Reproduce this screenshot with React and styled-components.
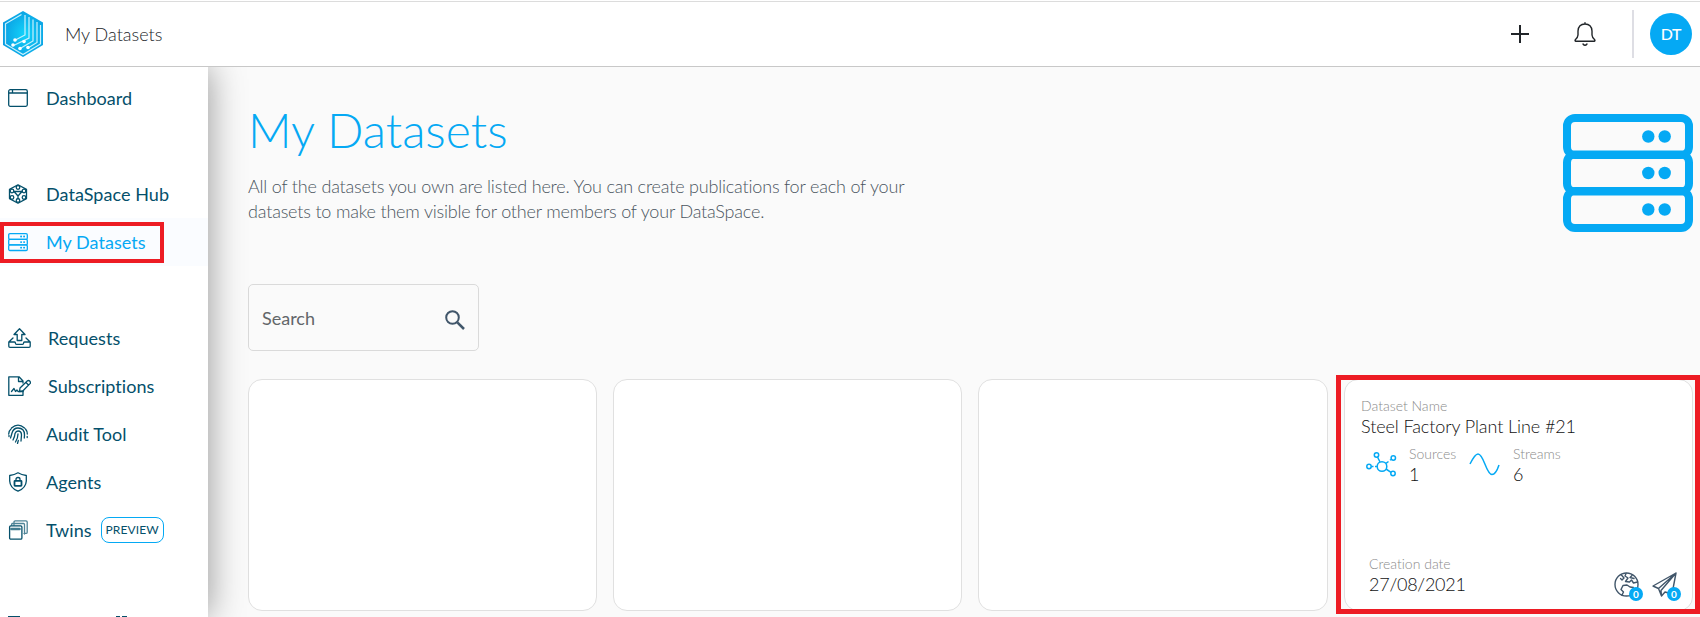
import React from 'react';
import styled, { createGlobalStyle } from 'styled-components';

const Global = createGlobalStyle`
  * { box-sizing: border-box; }
  html, body { margin: 0; height: 617px; overflow: hidden; }
  body { font-family: Lato, "Liberation Sans", sans-serif; font-variant-ligatures: none; background: #fafafa; }
`;
const blue = '#05a9f4';
const teal = '#04506b';

const Page = styled.div`
  height: 617px; display: flex; flex-direction: column; overflow: hidden; background: #fafafa;
`;
const Header = styled.header`
  position: relative; z-index: 2; flex: none; height: 67px; display: flex; align-items: center;
  background: #fff; border-bottom: 1px solid #c8c8c8; padding: 1px 8px 0 2px;
  box-shadow: inset 0 1px 0 #fff, inset 0 2px 0 #dcdcdc;
`;
const Crumb = styled.span`
  font-size: 18px; font-weight: 300; color: #212529; margin-left: 21px; flex: 1; line-height: 24px; padding-top: 1px;
`;
const Divider = styled.i`width: 2px; height: 48px; background: #dedee4;`;
const Avatar = styled.div`
  width: 42px; height: 42px; border-radius: 50%; background: ${blue}; color: #fff; margin-left: 16px;
  display: flex; align-items: center; justify-content: center; font-size: 16px; font-weight: 500; letter-spacing: -.3px;
`;
const HeaderIcon = styled.svg`display: block; flex: none; margin-right: ${p => p.$gap}px;`;
const Body = styled.div`flex: 1; min-height: 0; display: flex;`;
const Sidebar = styled.nav`
  position: relative; z-index: 1; width: 208px; flex: none; background: #fff; padding-top: 7px;
  box-shadow: 0 0 34px rgba(0,0,0,.42); overflow: visible;
`;
const NavItem = styled.div`
  height: 48px; display: flex; align-items: center; padding-left: 8px; margin-bottom: ${p => p.$gap || 0}px;
  color: ${p => (p.$active ? blue : teal)}; background: ${p => (p.$active ? '#fafcff' : 'transparent')};
`;
const NavIcon = styled.svg`
  width: ${p => (p.$wide ? 23 : 20)}px; height: 20px; flex: none; display: block; fill: none; stroke: currentColor; stroke-width: 1.3;
  stroke-linecap: round; stroke-linejoin: round; margin-right: ${p => (p.$wide ? 17 : 18)}px;
`;
const NavLabel = styled.span`font-size: 18px; line-height: 24px; padding-bottom: 1px; letter-spacing: .05px;`;
const Preview = styled.span`
  margin-left: 9px; height: 26px; width: 63px; border: 1px solid ${blue}; border-radius: 8px; font-size: 12px; letter-spacing: .1px;
  display: flex; align-items: center; justify-content: center; padding-bottom: 2px;
`;
const Cut = styled.svg`display: block; height: 1px; width: 140px;`;
const Main = styled.main`flex: 1; min-width: 0; padding: 34px 7px 0 40px;`;
const Intro = styled.section`display: flex; justify-content: space-between; height: 183px;`;
const Title = styled.h1`margin: -1px 0 0; font-size: 48px; line-height: 60px; font-weight: 300; color: ${blue};`;
const Text = styled.p`
  margin: 14px 0 0; width: 670px; font-size: 18px; line-height: 25px; font-weight: 300; color: #4a5560; letter-spacing: -.19px;
`;
const ServerArt = styled.svg`display: block; margin-top: 13px; flex: none;`;
const Search = styled.div`
  width: 231px; height: 67px; border: 1px solid #dadada; border-radius: 5px; display: flex; align-items: center;
  justify-content: space-between; padding: 0 13px; font-size: 18px; color: #626669; font-weight: 400;
`;
const SearchIcon = styled.svg`display: block; margin-top: 4px; fill: none; stroke: #41566a; stroke-width: 2;`;
const Grid = styled.div`display: grid; grid-template-columns: 349px 349px 350px 1fr; gap: 16px; margin-top: 28px;`;
const Card = styled.article`
  height: 232px; background: #fff; border: 1px solid #e0e0e0; border-radius: 14px; padding: 17px 11px 0 16px;
  display: flex; flex-direction: column;
`;
const Caption = styled.div`font-size: 14px; line-height: 17px; font-weight: 300; color: #8b8b8b;`;
const Value = styled.div`font-size: 18px; line-height: 24px; font-weight: 300; color: #111; letter-spacing: -.09px;`;
const Stats = styled.div`display: flex; margin-top: 7px;`;
const Stat = styled.div`display: flex; width: ${p => p.$w}px;`;
const StatIcon = styled.svg`display: block; width: 32px; height: 28px; margin: 6px 12px 0 4px; fill: none; stroke: ${blue}; stroke-width: 1.5;`;
const Foot = styled.div`margin-top: auto; padding: 0 0 11px 8px; display: flex; justify-content: space-between; align-items: flex-end;`;
const Created = styled.div`padding-bottom: 3px; ${Value} { letter-spacing: -.25px; }`;
const Actions = styled.div`display: flex; gap: 9px; margin-bottom: -2px;`;
const Action = styled.div`position: relative; width: 29px; height: 29px;`;
const ActionIcon = styled.svg`display: block; fill: none; stroke: #41566a; stroke-width: 1.4; stroke-linejoin: round; stroke-linecap: round;`;
const Count = styled.b`
  position: absolute; right: 0; bottom: 0; width: 14px; height: 14px; border-radius: 50%; background: ${blue};
  color: #fff; font-size: 10px; line-height: 14px; text-align: center;
`;
const Mark = styled.div`
  position: absolute; z-index: 5; left: ${p => p.$x}px; top: ${p => p.$y}px; width: ${p => p.$w}px; height: ${p => p.$h}px;
  border: ${p => p.$b}px solid #ed1c24; pointer-events: none;
`;

const Logo = () => (
  <svg width="42" height="48" viewBox="0 0 42 48" fill="none">
    <defs>
      <radialGradient id="lg" cx=".55" cy=".5" r=".6">
        <stop offset="0" stopColor="#12d4fb" /><stop offset="1" stopColor="#0a9be0" />
      </radialGradient>
    </defs>
    <path d="M21 1 41 12.500V35L21 47 1 35V12.500Z" fill="url(#lg)" />
    <g stroke="#c9f1fd" strokeWidth="1.200">
      <path d="M19.500 4.500 3.500 13.800V34L21 44.500 38.500 34V15" />
      <path d="M23 5V25L12.500 30.500M27 7V28L10.500 36M31 9.500V31L19 38M35 12V32.500L26 38" />
    </g>
    <g fill="#fff"><circle cx="13" cy="30" r="1.800" /><circle cx="22" cy="31.500" r="1.800" /><circle cx="11" cy="35" r="1.800" /><circle cx="18" cy="38.500" r="1.800" /><circle cx="26" cy="37.500" r="1.800" /></g>
  </svg>
);

const icons = {
  dashboard: <><rect x=".7" y="1.700" width="18.600" height="16.600" rx="1.500" /><path d="M1 5H19M4.500 2V5" /></>,
  hub: <><path d="M10 .8 18.500 5.400V14.600L10 19.200 1.500 14.600V5.400Z" /><g strokeWidth="1.300"><circle cx="10" cy="3.500" r="1.800" /><circle cx="4" cy="7" r="1.800" /><circle cx="16" cy="7" r="1.800" /><circle cx="4" cy="13.500" r="1.800" /><circle cx="16" cy="13.500" r="1.800" /><circle cx="10" cy="16.500" r="1.800" /><path d="M6 7.500 10 12 14 7.500ZM10 12V15" /></g></>,
  data: <><rect x=".7" y="1.700" width="18.600" height="5.600" rx="1.200" /><rect x=".7" y="7.300" width="18.600" height="5.600" rx="1.200" /><rect x=".7" y="12.900" width="18.600" height="5.600" rx="1.200" /><path d="M13 4.500h.2M16 4.500h.2M13 10.100h.2M16 10.100h.2M13 15.700h.2M16 15.700h.2" strokeWidth="1.800" /></>,
  requests: <><path d="M5 10 .8 14V18.200Q.8 19.300 2 19.300H21Q22.200 19.300 22.200 18.200V14L18 10M.8 14H6.500Q7.500 14 7.500 15.500 7.500 16.300 8.500 16.300H14.500Q15.500 16.300 15.500 15.500 15.500 14 16.500 14H22.200" /><path d="M11.500 .7 17 6.500H13.800V12.500H9.200V6.500H6Z" /></>,
  subs: <><path d="M15 15V19.300H.8V.8H11L15 5V7M10.500 1V5.500H15" /><path d="M11.500 15.500 12 12 19.500 4.800Q20.600 4 22 5.300 23 6.500 22 7.600L14.800 15ZM18 6.500 20.500 9" /><path d="M3.500 15.500 6 12.500 7.500 15.500 9 14 10 15.500H15" /></>,
  audit: <><path d="M3.500 4Q10-1.800 16.500 4M.7 10Q1 6.500 3 5M19.300 10Q19.300 7 17.500 5M2.500 14Q3.500 11 4 9 5.500 4 10 4 16.500 4 16.500 11L16.300 14M5 16Q7 12 7 9.500 8 7 10 7 13.500 7 13.500 11L13 17M7.500 18Q10 14 10 10M10.300 16.500 9.500 19.500M19.200 12.500V13.500M1 12.500V11.500" /></>,
  agents: <><path d="M10 .8Q13.500 3 18.300 3.500V9Q18 16 10 19.200 2 16 1.700 9V3.500Q6.500 3 10 .8Z" /><rect x="6.500" y="8.800" width="7" height="5" rx=".5" strokeWidth="1.800" /><path d="M8 8.500V7.200Q8 5.500 10 5.500 12 5.500 12 7.200V8.500" /></>,
  twins: <><path opacity=".7" d="M6 5V2Q6 .9 7.200 .9H18Q19.200 .9 19.200 2V12.200Q19.200 13.400 18 13.400H16M3.500 5 4 3.500H15.500Q16.500 3.500 16.500 4.500V14" /><rect x="1.600" y="5.800" width="12.300" height="13.300" rx="1.200" /><path d="M3.500 9H11.500" strokeWidth="2.600" opacity=".75" /></>,
};

const NAV = [
  ['dashboard', 'Dashboard', 48], ['hub', 'DataSpace Hub', 0], ['data', 'My Datasets', 48, true],
  ['requests', 'Requests', 0], ['subs', 'Subscriptions', 0], ['audit', 'Audit Tool', 0],
  ['agents', 'Agents', 0], ['twins', 'Twins', 62],
];

export default function App() {
  return (
    <Page>
      <Global />
      <Header>
        <Logo />
        <Crumb>My Datasets</Crumb>
        <HeaderIcon $gap={45} width="18" height="18" viewBox="0 0 18 18"><path d="M9 0V18M0 9H18" stroke="#212529" strokeWidth="2" /></HeaderIcon>
        <HeaderIcon $gap={36} width="22" height="24" viewBox="0 0 22 24" fill="none" stroke="#212529" strokeWidth="1.400" strokeLinecap="round" strokeLinejoin="round">
          <path d="M11 .7V2M11 2Q17.500 2 18 9V13Q18.200 15.500 20.500 17.500 21.500 19 20.300 19.300H1.700Q.5 19 1.500 17.500 3.800 15.500 4 13V9Q4.500 2 11 2ZM9 22Q11 24.500 13 22" />
        </HeaderIcon>
        <Divider />
        <Avatar>DT</Avatar>
      </Header>
      <Body>
        <Sidebar>
          {NAV.map(([icon, label, gap, active]) => (
            <NavItem key={label} $gap={gap} $active={active}>
              <NavIcon $wide={icon === 'requests' || icon === 'subs'}>{icons[icon]}</NavIcon>
              <NavLabel>{label}</NavLabel>
              {icon === 'twins' && <Preview>PREVIEW</Preview>}
            </NavItem>
          ))}
          <Cut><path d="M8 .5H20M116 .5H120M122 .5H127" stroke={teal} /></Cut>
        </Sidebar>
        <Main>
          <Intro>
            <div>
              <Title>My Datasets</Title>
              <Text>All of the datasets you own are listed here. You can create publications for each of your datasets to make them visible for other members of your DataSpace.</Text>
            </div>
            <ServerArt width="130" height="118" fill="none" stroke={blue} strokeWidth="8">
              {[0, 36.5, 73].map(y => (
                <g key={y}>
                  <rect x="4" y={y + 4} width="122" height="37" rx="8" />
                  <g fill={blue} stroke="none"><circle cx="85.300" cy={y + 22.500} r="6.200" /><circle cx="101.700" cy={y + 22.500} r="6.200" /></g>
                </g>
              ))}
            </ServerArt>
          </Intro>
          <Search>
            Search
            <SearchIcon width="20" height="20" viewBox="0 0 20 20"><circle cx="7.500" cy="7.500" r="6.300" /><path d="M12.300 12.300 19 19" strokeWidth="2.500" /></SearchIcon>
          </Search>
          <Grid>
            <Card /><Card /><Card />
            <Card>
              <Caption>Dataset Name</Caption>
              <Value>Steel Factory Plant Line #21</Value>
              <Stats>
                <Stat $w={104}>
                  <StatIcon viewBox="0 0 32 28">
                    <circle cx="17" cy="15.500" r="4.800" /><circle cx="11.500" cy="4" r="2.200" /><circle cx="28.300" cy="7" r="2.200" /><circle cx="4" cy="15.500" r="2.200" /><circle cx="28" cy="22.500" r="2.200" />
                    <path d="M12.500 6 15 11M6.300 15.500H8.500M10 15.500H12M26 8.500 25 9.200M23.500 10.500 21 12.300M21 18 26 21.300" />
                  </StatIcon>
                  <div><Caption>Sources</Caption><Value>1</Value></div>
                </Stat>
                <Stat $w={110}>
                  <StatIcon viewBox="0 0 32 28"><path d="M1 13C5 5 7 3 9 3C15 3 17 23.500 23 23.500C26 23.500 28 20 30 14" /></StatIcon>
                  <div><Caption>Streams</Caption><Value>6</Value></div>
                </Stat>
              </Stats>
              <Foot>
                <Created><Caption>Creation date</Caption><Value>27/08/2021</Value></Created>
                <Actions>
                  <Action>
                    <ActionIcon width="25" height="25" viewBox="0 0 25 25"><circle cx="12.500" cy="12.500" r="11.500" /><path d="M7 2.500 10 6 8 8 6.500 6.500M12 1.500 11 4 14 6 11.500 9.500 15.500 10 17.500 8 19.500 11 23.500 10M18 3.500 16 5.500 20 6.500M8 23 9.500 20 7 17.500 9 13.500 13 13 16 15 19.500 15.500" /></ActionIcon>
                    <Count>0</Count>
                  </Action>
                  <Action>
                    <ActionIcon width="25" height="25" viewBox="0 0 25 25"><path d="M24 1 1 14 6.500 16.500 24 1 9 18.500 9.500 24 13 20 20 22 24 1ZM6.500 16.500 9.500 24" /></ActionIcon>
                    <Count>0</Count>
                  </Action>
                </Actions>
              </Foot>
            </Card>
          </Grid>
        </Main>
      </Body>
      <Mark $x={0} $y={222} $w={164} $h={41} $b={4} />
      <Mark $x={1336} $y={375} $w={364} $h={239} $b={5} />
    </Page>
  );
}
